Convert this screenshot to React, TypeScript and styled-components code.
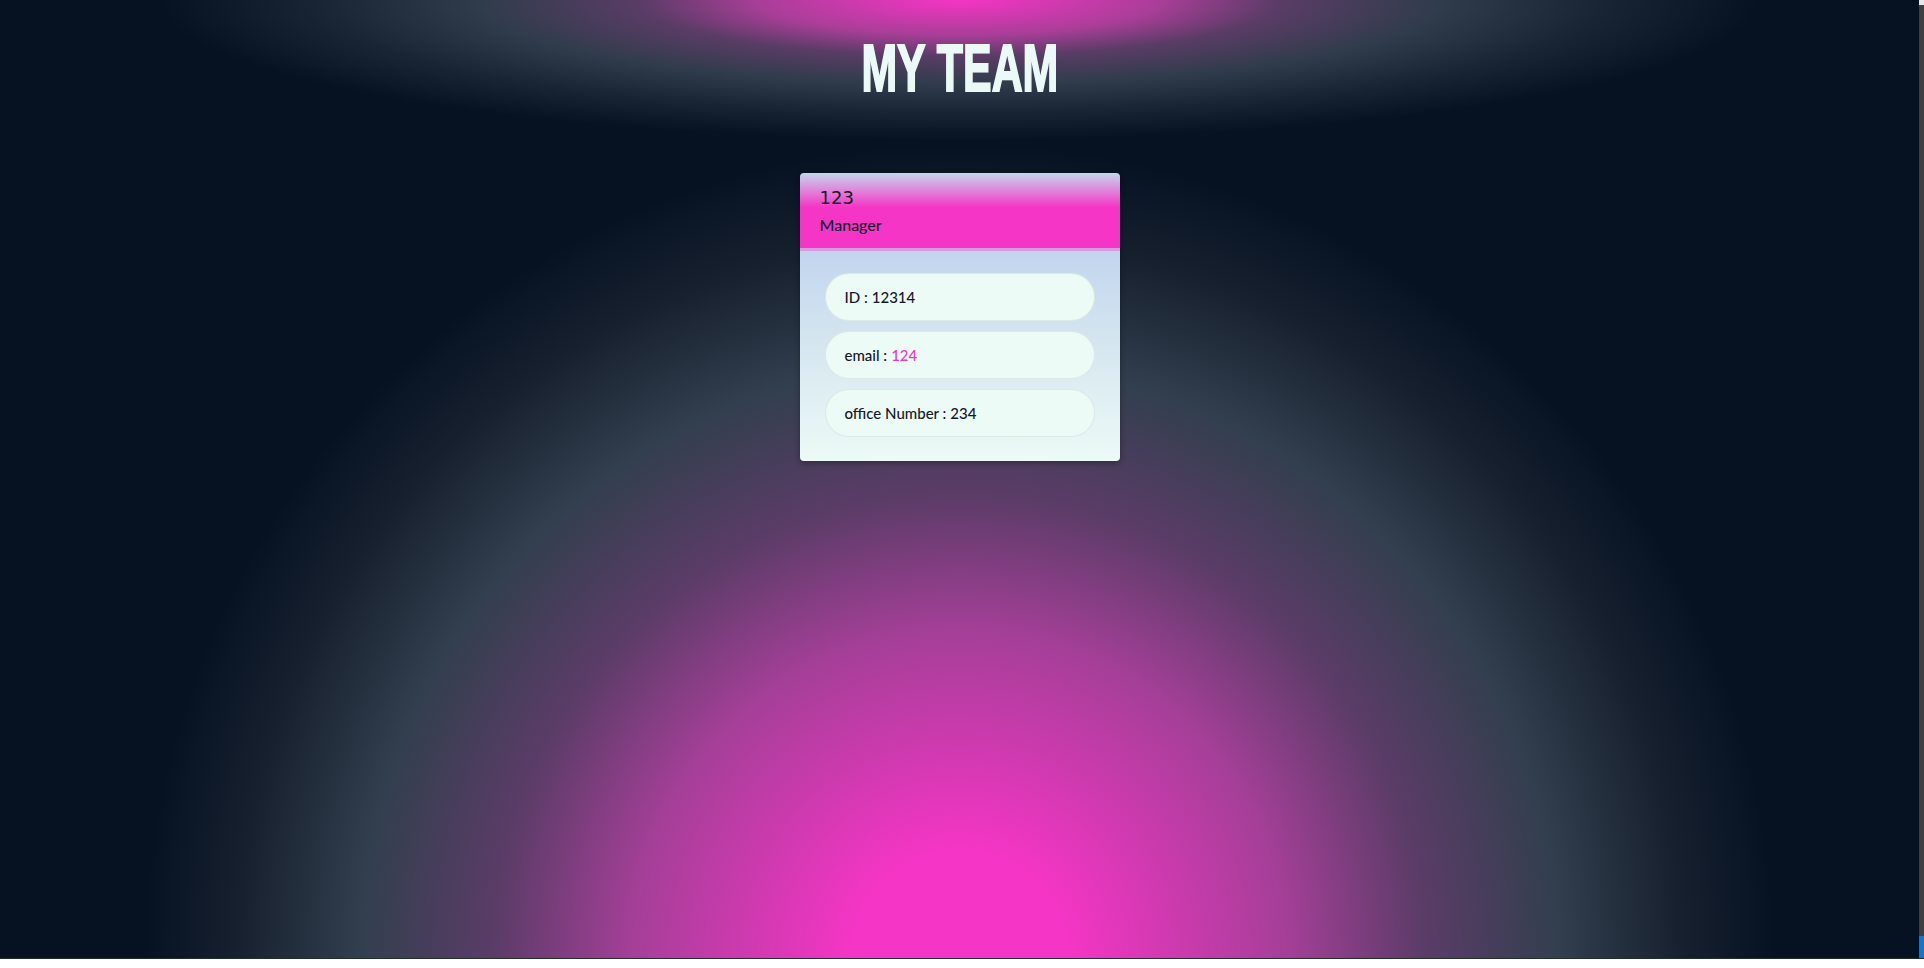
import React from "react";
import styled, { createGlobalStyle } from "styled-components";

const GlobalStyle = createGlobalStyle`
  html, body {
    margin: 0;
    padding: 0;
    background: #ffffff;
  }
  * { box-sizing: border-box; }
`;

const Window = styled.div`
  display: flex;
  flex-direction: column;
  width: 100%;
  height: 968px;
  overflow: hidden;
`;

const Row = styled.div`
  display: flex;
  height: 959px;
  border-bottom: 1px solid #252c33;
`;

const Main = styled.main`
  flex: 1;
  display: flex;
  flex-direction: column;
  align-items: center;
  background:
    radial-gradient(ellipse 1360px 1358px at 50% 100%, #f535c5 0%, #f535c5 8%, #a53f98 24%, #5c3c68 34%, #323f4e 44%, #17202f 53%, #061222 60%, #061222 100%);
`;

const Header = styled.header`
  width: 100%;
  height: 140px;
  display: flex;
  justify-content: center;
  background: radial-gradient(ellipse 800px 140px at 50% 0%, #f535c5 0%, #a93e98 25%, #5a3c66 40%, #303c4c 60%, rgba(48, 60, 76, 0.45) 80%, rgba(6, 18, 34, 0) 100%);
`;

const Title = styled.h1`
  margin: 30px 0 0;
  font-family: "Liberation Sans Narrow", "Liberation Sans", Arial, sans-serif;
  font-weight: 700;
  font-size: 67px;
  line-height: 76px;
  color: #ebfaf6;
  -webkit-text-stroke: 2px #ebfaf6;
  transform: scaleX(0.64);
  transform-origin: center;
`;

const Card = styled.section`
  margin-top: 33px;
  width: 320px;
  border-radius: 4px;
  overflow: hidden;
  box-shadow: 0 2px 6px rgba(0, 0, 0, 0.35);
`;

const CardHeader = styled.div`
  height: 78px;
  padding: 13px 20px 0;
  background: linear-gradient(to bottom, #c3d6ee 0%, #e27fd8 25%, #f535c5 46%, #f535c5 100%);
  border-bottom: 3px solid #d99ae0;
  font-family: "Lato", "Noto Sans", sans-serif;
  color: #15172b;
`;

const Name = styled.h2`
  margin: 0;
  font-size: 18px;
  font-weight: 400;
  line-height: 24px;
  font-family: "DejaVu Sans", "Noto Sans", sans-serif;
`;

const Role = styled.h3`
  margin: 4px 0 0;
  font-size: 16px;
  font-weight: 500;
  line-height: 22px;
`;

const CardBody = styled.ul`
  list-style: none;
  margin: 0;
  padding: 22px 25px 24px;
  display: flex;
  flex-direction: column;
  gap: 10px;
  background: linear-gradient(to bottom, #c2d5ee 0%, #d8e8f0 50%, #ecfbf6 100%);
`;

const Item = styled.li`
  height: 48px;
  display: flex;
  align-items: center;
  padding-left: 19px;
  border-radius: 24px;
  background: #ecfbf6;
  border: 1px solid rgba(20, 40, 60, 0.08);
  font-family: "Lato", "Noto Sans", sans-serif;
  font-size: 15px;
  font-weight: 500;
  color: #15172b;
`;

const Accent = styled.span<{ $pink?: boolean }>`
  margin-left: 4px;
  color: ${(p) => (p.$pink ? "#f535c5" : "#15172b")};
`;

const Scrollbar = styled.div`
  width: 5px;
  display: flex;
  flex-direction: column;
  justify-content: space-between;
  background: #3d3f42;
`;

const ScrollTop = styled.div`
  height: 5px;
  background: #e8e8e8;
`;

const ScrollThumb = styled.div`
  height: 22px;
  background: #0a78d4;
`;

export default function App() {
  return (
    <Window>
      <GlobalStyle />
      <Row>
        <Main>
          <Header>
            <Title>MY TEAM</Title>
          </Header>
          <Card>
            <CardHeader>
              <Name>123</Name>
              <Role>Manager</Role>
            </CardHeader>
            <CardBody>
              <Item>
                ID :<Accent>12314</Accent>
              </Item>
              <Item>
                email :<Accent $pink>124</Accent>
              </Item>
              <Item>
                office Number :<Accent>234</Accent>
              </Item>
            </CardBody>
          </Card>
        </Main>
        <Scrollbar>
          <ScrollTop />
          <ScrollThumb />
        </Scrollbar>
      </Row>
    </Window>
  );
}
